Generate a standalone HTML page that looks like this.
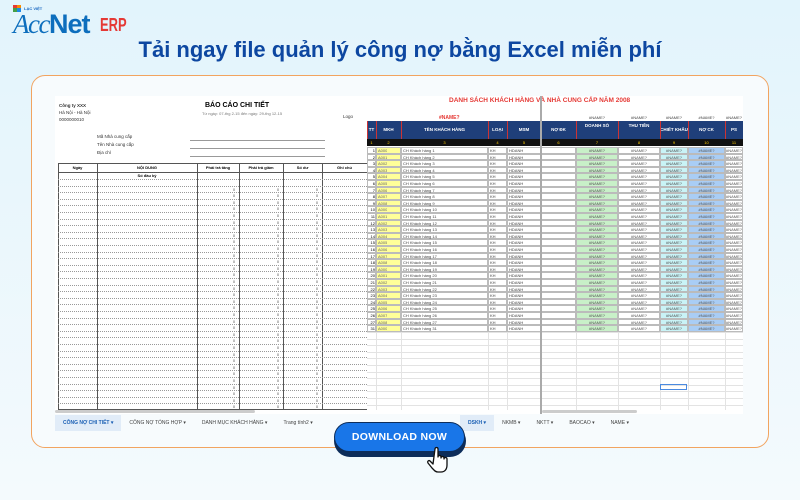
<!DOCTYPE html>
<html><head><meta charset="utf-8"><style>
*{margin:0;padding:0;box-sizing:border-box}
body{width:800px;height:500px;overflow:hidden;background:linear-gradient(#e2f4fc,#f4fafd);font-family:"Liberation Sans",sans-serif;position:relative}
.abs{position:absolute}
h1{position:absolute;left:0;width:800px;top:37px;text-align:center;font-size:22px;color:#0d47a1;font-weight:bold;letter-spacing:0}
.card{left:31px;top:75px;width:738px;height:373px;border:1.5px solid #f2a460;border-radius:14px;background:#f7fbfd}
.lsheet{left:55px;top:96px;width:312px;height:318px;background:#fff;overflow:hidden}
.rsheet{left:367px;top:96px;width:376px;height:318px;background:#fff;overflow:hidden}
.t{font-size:4.5px;color:#333;white-space:nowrap}
.cell{position:absolute;font-size:4px;white-space:nowrap;overflow:hidden;text-align:center}
.tabs{top:414px;height:18px;font-size:5px;color:#444;display:flex;align-items:center;background:#f7fbfd}
.tabs span{padding:0 8px;height:16px;line-height:16px}
</style></head><body>
<!-- logo -->
<div class="abs" style="left:13px;top:5px;width:4px;height:3px;background:#e53935"></div>
<div class="abs" style="left:17px;top:5px;width:4px;height:3px;background:#fb8c00"></div>
<div class="abs" style="left:13px;top:8px;width:4px;height:4px;background:#43a047"></div>
<div class="abs" style="left:17px;top:8px;width:4px;height:4px;background:#1e88e5"></div>
<div class="abs" style="left:24px;top:6px;font-size:4px;color:#1565c0;font-weight:bold">LẠC VIỆT</div>
<div class="abs" style="left:13px;top:9px;font-size:27px;line-height:30px;color:#0d6ebd;font-family:'Liberation Serif',serif;font-style:italic;letter-spacing:-1.5px">Acc<b style="font-family:'Liberation Sans',sans-serif;font-style:normal;letter-spacing:-1px">Net</b></div>
<div class="abs" style="left:100px;top:15px;font-size:18px;line-height:20px;color:#e53935;font-weight:bold;transform:scaleX(.72);transform-origin:left">ERP</div>
<h1>Tải ngay file quản lý công nợ bằng Excel miễn phí</h1>
<div class="abs card"></div>
<div class="abs lsheet" id="ls">
 <div class="abs t" style="left:4px;top:7px;font-weight:bold">Công ty XXX</div>
 <div class="abs t" style="left:4px;top:14px">Hà Nội - Hà Nội</div>
 <div class="abs t" style="left:4px;top:21px">0000000010</div>
 <div class="abs" style="left:150px;top:6px;font-size:7px;font-weight:bold">BÁO CÁO CHI TIẾT</div>
 <div class="abs t" style="left:147px;top:15px;color:#777;font-size:4px">Từ ngày: 07-thg 2-15 đến ngày: 29-thg 12-15</div>
 <div class="abs t" style="left:288px;top:18px">Logo</div>
 <div class="abs t" style="left:42px;top:38px">Mã Nhà cung cấp</div>
 <div class="abs t" style="left:42px;top:46px">Tên Nhà cung cấp</div>
 <div class="abs t" style="left:42px;top:54px">Địa chỉ</div>
 <div class="abs" style="left:135px;top:44px;width:135px;border-top:.5px solid #999"></div>
 <div class="abs" style="left:135px;top:52px;width:135px;border-top:.5px solid #999"></div>
 <div class="abs" style="left:135px;top:60px;width:135px;border-top:.5px solid #999"></div>
</div>
<div class="abs rsheet" id="rs">
 <div class="abs" style="left:82px;top:1px;font-size:6.5px;font-weight:bold;color:#e53935">DANH SÁCH KHÁCH HÀNG VÀ NHÀ CUNG CẤP NĂM 2008</div>
 <div class="abs" style="left:72px;top:19px;font-size:5px;font-weight:bold;color:#e53935">#NAME?</div>
</div>
<div class="abs tabs" style="left:55px;width:312px">
 <span style="background:#e1ecf8;color:#1a5fb4;font-weight:bold">CÔNG NỢ CHI TIẾT ▾</span><span>CÔNG NỢ TỔNG HỢP ▾</span><span>DANH MỤC KHÁCH HÀNG ▾</span><span>Trang tính2 ▾</span>
</div>
<div class="abs tabs" style="left:460px;width:283px">
 <span style="background:#e1ecf8;color:#1a5fb4;font-weight:bold">DSKH ▾</span><span>NKMB ▾</span><span>NKTT ▾</span><span>BAOCAO ▾</span><span>NAME ▾</span>
</div>
<div class="abs" style="left:334px;top:425px;width:132px;height:32px;border-radius:16px;background:#0d2d5a"></div>
<div class="abs" style="left:334px;top:422px;width:131px;height:30px;border-radius:15px;background:#1976e8;border:1px solid #0d2d5a;color:#fff;font-weight:bold;font-size:10.5px;text-align:center;line-height:28px;letter-spacing:.3px">DOWNLOAD NOW</div>
<svg class="abs" style="left:427px;top:446px" width="26" height="28" viewBox="0 0 26 28"><path d="M8 3c0-2 3-2 3 0v8c0-2 3-2 3 0v1c0-2 3-2 3 0v1c0-2 3-2 3 0v6c0 4-2 7-6 7h-3c-3 0-4-2-6-4l-4-5c-1-2 1-3 2-2l3 3z" fill="#fff" stroke="#111" stroke-width="1.3" stroke-linejoin="round"/></svg>
<script>
var ls=document.getElementById('ls'),h='';
var lc=[3,42,142,184,228,267,312];
h+='<div class="abs" style="left:3px;top:67px;width:309px;height:247px;border:1px solid #555;border-right:none"></div>';
['Ngày','NỘI DUNG','Phải trả tăng','Phải trả giảm','Số dư','Ghi chú'].forEach(function(s,i){h+='<div class="cell" style="left:'+lc[i]+'px;top:69px;width:'+(lc[i+1]-lc[i])+'px;font-weight:bold">'+s+'</div>';});
for(var i=1;i<6;i++)h+='<div class="abs" style="left:'+lc[i]+'px;top:67px;height:247px;border-left:.7px solid #555"></div>';
h+='<div class="abs" style="left:3px;top:76px;width:309px;border-top:.7px solid #555"></div>';
h+='<div class="cell" style="left:42px;top:77px;width:100px;font-weight:bold">Số đầu kỳ</div>';
for(var y=83;y<314;y+=6.6){h+='<div class="abs" style="left:3px;top:'+y+'px;width:309px;border-top:.6px dotted #999"></div>';
 if(y>84)[184,228,267].forEach(function(x){h+='<div class="cell" style="left:'+(x-8)+'px;top:'+(y+1)+'px;width:6px;color:#555">0</div>';});}
h+='<div class="abs" style="left:0;top:314px;width:200px;height:3px;background:#ccc;border-radius:2px"></div>';
ls.innerHTML+=h;
var rs=document.getElementById('rs');h='';
var c=[0,9,34,121,140,174,209,251,293,321,358,376];
var nm=['TT','MKH','TÊN KHÁCH HÀNG','LOẠI','MSM','NỢ ĐK','DOANH SỐ','THU TIỀN','CHIẾT KHẤU','NỢ CK','PS'];
h+='<div class="abs" style="left:0;top:25px;width:376px;height:18px;background:#1f3f7a"></div>';
h+='<div class="abs" style="left:0;top:43px;width:376px;height:7px;background:#111"></div>';
for(var i=0;i<11;i++){h+='<div class="cell" style="left:'+c[i]+'px;top:'+(i==6||i==7?27:31)+'px;width:'+(c[i+1]-c[i])+'px;color:#fff;font-weight:bold;font-size:4.5px">'+nm[i]+'</div>';
 h+='<div class="abs" style="left:'+c[i]+'px;top:25px;height:18px;border-left:.8px solid #c33"></div>';
 h+='<div class="cell" style="left:'+c[i]+'px;top:44px;width:'+(c[i+1]-c[i])+'px;color:#fc0">'+(i+1)+'</div>';
 if(i>=6)h+='<div class="cell" style="left:'+c[i]+'px;top:19px;width:'+(c[i+1]-c[i])+'px;color:#444">#NAME?</div>';}
var rows=[1,2,3,4,5,6,7,8,9,10,11,12,13,14,15,16,17,18,19,20,21,22,23,24,25,26,27,31];
var bg=[null,'#ffff99',null,null,null,null,'#c8f0c8',null,'#c9f3f6','#a9cdf5','#fff'];
rows.forEach(function(n,k){var y=51+k*6.6;
 for(var i=0;i<11;i++){var b=bg[i];h+='<div class="abs" style="left:'+c[i]+'px;top:'+y+'px;width:'+(c[i+1]-c[i])+'px;height:6.6px;border:.4px solid #bbb;'+(b?'background:'+b:'')+'"></div>';}
 h+='<div class="cell" style="left:0;top:'+(y+1)+'px;width:8px;text-align:right">'+n+'</div>';
 h+='<div class="cell" style="left:11px;top:'+(y+1)+'px;color:#666">A00'+k%9+'</div>';
 h+='<div class="cell" style="left:36px;top:'+(y+1)+'px;color:#444">CH Khách hàng '+n+'</div>';
 h+='<div class="cell" style="left:123px;top:'+(y+1)+'px;color:#444">KH</div>';
 h+='<div class="cell" style="left:142px;top:'+(y+1)+'px;color:#444">HDANH</div>';
 for(var i=6;i<11;i++)h+='<div class="cell" style="left:'+c[i]+'px;top:'+(y+1)+'px;width:'+(c[i+1]-c[i])+'px;color:#555">#NAME?</div>';});
for(var y=236;y<314;y+=6.6)h+='<div class="abs" style="left:0;top:'+y+'px;width:376px;border-top:.4px solid #e3e3e3"></div>';
for(var i=1;i<11;i++)h+='<div class="abs" style="left:'+c[i]+'px;top:236px;height:78px;border-left:.4px solid #e3e3e3"></div>';
h+='<div class="abs" style="left:173px;top:0;height:318px;border-left:2px solid #aaa"></div>';
h+='<div class="abs" style="left:293px;top:288px;width:27px;height:6px;border:1px solid #4a8ae0"></div>';
h+='<div class="abs" style="left:175px;top:314px;width:95px;height:3px;background:#ccc;border-radius:2px"></div>';
rs.innerHTML+=h;
</script>
</body></html>
